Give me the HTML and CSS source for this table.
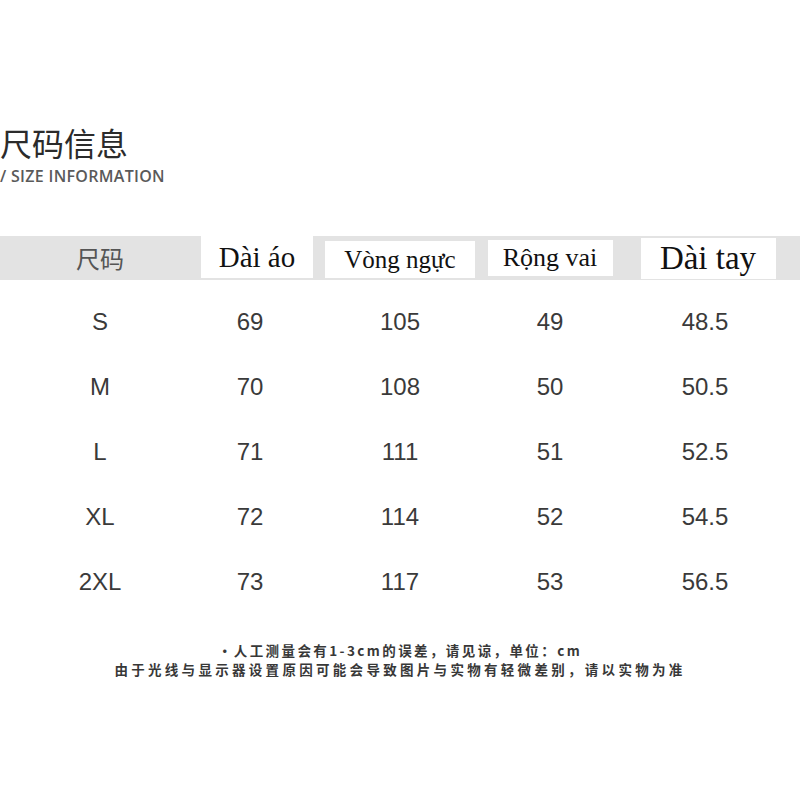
FILE: index.html
```html
<!DOCTYPE html>
<html lang="zh">
<head>
<meta charset="utf-8">
<title>尺码信息</title>
<link rel="stylesheet" href="styles.css">
</head>
<body>
<div class="page">
  <header class="title-block">
    <h1 class="title">尺码信息</h1>
    <p class="subtitle">/ SIZE INFORMATION</p>
  </header>

  <div class="head-band">
    <div class="cell"><span class="cn-head">尺码</span></div>
    <div class="cell"><span class="vbox b1">Dài áo</span></div>
    <div class="cell"><span class="vbox b2">Vòng ngực</span></div>
    <div class="cell"><span class="vbox b3">Rộng vai</span></div>
    <div class="cell"><span class="vbox b4">Dài tay</span></div>
  </div>

  <div class="rows">
    <div class="row"><span>S</span><span>69</span><span>105</span><span>49</span><span>48.5</span></div>
    <div class="row"><span>M</span><span>70</span><span>108</span><span>50</span><span>50.5</span></div>
    <div class="row"><span>L</span><span>71</span><span>111</span><span>51</span><span>52.5</span></div>
    <div class="row"><span>XL</span><span>72</span><span>114</span><span>52</span><span>54.5</span></div>
    <div class="row"><span>2XL</span><span>73</span><span>117</span><span>53</span><span>56.5</span></div>
  </div>

  <footer class="notes">
    <p class="note n1">•人工测量会有1-3cm的误差，请见谅，单位：cm</p>
    <p class="note n2">由于光线与显示器设置原因可能会导致图片与实物有轻微差别，请以实物为准</p>
  </footer>
</div>
</body>
</html>
```

FILE: styles.css
```css
html, body {
  margin: 0;
  padding: 0;
  background: #ffffff;
}

.page {
  width: 800px;
  height: 800px;
  overflow: hidden;
  font-family: "Liberation Sans", Arial, "Noto Sans CJK SC", sans-serif;
  color: #3a3a3a;
}

.title-block {
  padding-top: 122px;
  padding-left: 0;
}

.title {
  margin: 0;
  font-family: "Noto Sans CJK SC", sans-serif;
  font-weight: 400;
  font-size: 32px;
  line-height: 40px;
  color: #2b2b2b;
  letter-spacing: 0;
}

.subtitle {
  margin: 4px 0 0 0;
  font-family: "Open Sans", "Liberation Sans", sans-serif;
  font-size: 16px;
  line-height: 20px;
  font-weight: 600;
  color: #5a5a5a;
  letter-spacing: 0.3px;
}

.head-band {
  margin-top: 50px;
  height: 44px;
  background: #e3e3e3;
  display: grid;
  grid-template-columns: 150px 150px 150px 150px 160px;
  padding-left: 25px;
}

.cell {
  display: flex;
  justify-content: center;
  align-items: flex-start;
}

.cn-head {
  font-family: "Noto Sans CJK SC", sans-serif;
  font-size: 24px;
  line-height: 44px;
  color: #555555;
}

.vbox {
  display: flex;
  align-items: center;
  justify-content: center;
  background: #ffffff;
  font-family: "Liberation Serif", "Times New Roman", serif;
  color: #111111;
  box-sizing: border-box;
}

.b1 {
  width: 112px;
  height: 42px;
  margin-left: 14px;
  font-size: 29px;
}

.b2 {
  width: 152px;
  height: 37px;
  margin-top: 5px;
  font-size: 25px;
}

.b3 {
  width: 125px;
  height: 36px;
  margin-top: 4px;
  font-size: 26px;
}

.b4 {
  width: 135px;
  height: 41px;
  margin-top: 2px;
  margin-left: 6px;
  font-size: 33px;
}

.rows {
  padding-top: 9px;
  padding-left: 25px;
}

.row {
  display: grid;
  grid-template-columns: 150px 150px 150px 150px 160px;
  height: 65px;
  align-items: center;
  justify-items: center;
  font-size: 24px;
  color: #3a3a3a;
}

.notes {
  margin-top: 27px;
  text-align: center;
  font-family: "Noto Sans CJK SC", sans-serif;
  font-weight: 700;
  color: #383838;
}

.note {
  margin: 0;
  font-size: 13.5px;
  line-height: 19px;
}

.n1 {
  letter-spacing: 2.4px;
}

.n2 {
  letter-spacing: 3.3px;
}
```
